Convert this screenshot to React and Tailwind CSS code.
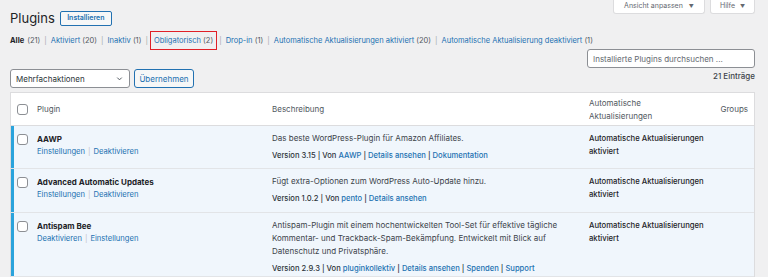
import React from 'react';

const font = { fontFamily: 'Inter, "Liberation Sans", sans-serif' };

const Sep = () => <span className="text-[#a7aaad] mx-[4px]">|</span>;

const Check = () => (
  <span className="block w-[11px] h-[11px] rounded-[3px] border border-[#8c8f94] bg-white" />
);

const plugins = [
  {
    name: 'AAWP',
    actions: ['Einstellungen', 'Deaktivieren'],
    desc: ['Das beste WordPress-Plugin für Amazon Affiliates.'],
    version: '3.15',
    author: 'AAWP',
    links: ['Details ansehen', 'Dokumentation'],
    h: 'h-[43px]',
  },
  {
    name: 'Advanced Automatic Updates',
    actions: ['Einstellungen', 'Deaktivieren'],
    desc: ['Fügt extra-Optionen zum WordPress Auto-Update hinzu.'],
    version: '1.0.2',
    author: 'pento',
    links: ['Details ansehen'],
    h: 'h-[44px]',
  },
  {
    name: 'Antispam Bee',
    actions: ['Deaktivieren', 'Einstellungen'],
    desc: [
      'Antispam-Plugin mit einem hochentwickelten Tool-Set für effektive tägliche',
      'Kommentar- und Trackback-Spam-Bekämpfung. Entwickelt mit Blick auf',
      'Datenschutz und Privatsphäre.',
    ],
    version: '2.9.3',
    author: 'pluginkollektiv',
    links: ['Details ansehen', 'Spenden', 'Support'],
    h: 'h-[64px]',
  },
];

const Row = ({ p }) => (
  <div className={`flex ${p.h} bg-[#f0f6fc] border-b border-[#e2e4e7] shadow-[inset_3px_0_0_#2aa3dc]`}>
    <div className="w-[20px] shrink-0 pl-[6px] pt-[8px]">
      <Check />
    </div>
    <div className="w-[234px] shrink-0 pl-[6px] pt-[7px]">
      <div className="font-bold text-[#1d2327] leading-[13px]">{p.name}</div>
      <div className="text-[#2271b1] text-[7.6px] leading-[12px]">
        {p.actions[0]}
        <span className="text-[#c3c4c7] mx-[3px]">|</span>
        {p.actions[1]}
      </div>
    </div>
    <div className="w-[318px] shrink-0 pl-[7px] pt-[6px] text-[#3c434a]">
      {p.desc.map((d) => (
        <div key={d} className="leading-[13px]">{d}</div>
      ))}
      <div className="mt-[4px] leading-[13px] text-[7.6px] font-medium text-[#2c3338]">
        Version {p.version} | Von <span className="text-[#2271b1]">{p.author}</span>
        {p.links.map((l) => (
          <span key={l}>
            {' '}| <span className="text-[#2271b1]">{l}</span>
          </span>
        ))}
      </div>
    </div>
    <div className="w-[130px] shrink-0 pl-[6px] pt-[6px] text-[#1d2327] text-[7.7px] font-medium leading-[13px]">
      <div>Automatische Aktualisierungen</div>
      <div>aktiviert</div>
    </div>
    <div className="flex-1" />
  </div>
);

export default function App() {
  return (
    <div style={font} className="w-[768px] h-[277px] overflow-hidden bg-[#f0f0f1] text-[8px] text-[#3c434a] relative">
      <div className="absolute top-0 right-[13px] flex gap-[5px]">
        <div className="h-[14px] w-[92px] bg-white border border-t-0 border-[#dcdcde] rounded-b-[3px] text-[#646970] text-[7px] flex items-center justify-center gap-[6px]">
          Ansicht anpassen <span className="text-[5px]">▼</span>
        </div>
        <div className="h-[14px] w-[45px] bg-white border border-t-0 border-[#dcdcde] rounded-b-[3px] text-[#646970] text-[7px] flex items-center justify-center gap-[5px]">
          Hilfe <span className="text-[5px]">▼</span>
        </div>
      </div>

      <div className="pl-[10px] pr-[13px]">
        <div className="flex items-center gap-[5px] pt-[6px] h-[30px]">
          <h1 className="text-[13px] text-[#1d2327] leading-[18px]">Plugins</h1>
          <span className="h-[15px] w-[52px] flex items-center justify-center border border-[#2271b1] rounded-[2px] bg-[#f6f7f7] text-[#2271b1] text-[7px] font-semibold">
            Installieren
          </span>
        </div>

        <div className="flex items-center h-[21px] whitespace-nowrap text-[7.5px]">
          <span className="font-bold text-[#1d2327]">Alle</span>
          <span className="text-[#50575e] ml-[3px]">(21)</span>
          <Sep />
          <span className="text-[#2271b1]">Aktiviert <span className="text-[#50575e]">(20)</span></span>
          <Sep />
          <span className="text-[#2271b1]">Inaktiv <span className="text-[#50575e]">(1)</span></span>
          <Sep />
          <span className="text-[#2271b1] border-[length:1.5px] border-solid border-[color:#e02027] px-[3px] h-[19px] flex items-center -mx-[2px]">
            Obligatorisch&nbsp;<span className="text-[#50575e]">(2)</span>
          </span>
          <Sep />
          <span className="text-[#2271b1]">Drop-in <span className="text-[#50575e]">(1)</span></span>
          <Sep />
          <span className="text-[#2271b1]">Automatische Aktualisierungen aktiviert <span className="text-[#50575e]">(20)</span></span>
          <Sep />
          <span className="text-[#2271b1]">Automatische Aktualisierung deaktiviert <span className="text-[#50575e]">(1)</span></span>
        </div>

        <div className="flex justify-end -mt-[2px]">
          <div className="w-[168px] h-[19px] border border-[#8c8f94] rounded-[3px] bg-white px-[5px] flex items-center text-[#646970]">
            Installierte Plugins durchsuchen ...
          </div>
        </div>

        <div className="flex items-center h-[21px]">
          <div className="w-[120px] h-[19px] border border-[#8c8f94] rounded-[3px] bg-white pl-[5px] pr-[5px] flex items-center justify-between text-[#2c3338]">
            Mehrfachaktionen
            <svg width="9" height="9" viewBox="0 0 20 20" fill="none" stroke="#50575e" strokeWidth="2.2">
              <path d="M5 8l5 5 5-5" />
            </svg>
          </div>
          <span className="ml-[4px] w-[60px] h-[19px] border border-[#2271b1] rounded-[3px] bg-[#f6f7f7] text-[#2271b1] flex items-center justify-center">
            Übernehmen
          </span>
          <span className="ml-auto self-start mt-[2px] text-[#3c434a] font-medium">21 Einträge</span>
        </div>

        <div className="mt-[3px] bg-white border border-[#dcdcde]">
          <div className="flex h-[33px] border-b border-[#dcdcde] text-[#50575e] items-center">
            <div className="w-[20px] shrink-0 pl-[6px]">
              <Check />
            </div>
            <div className="w-[234px] shrink-0 pl-[6px]">Plugin</div>
            <div className="w-[318px] shrink-0 pl-[7px]">Beschreibung</div>
            <div className="w-[130px] shrink-0 pl-[6px] leading-[13px] pt-[2px]">
              Automatische
              <br />
              Aktualisierungen
            </div>
            <div className="flex-1 text-right pr-[6px]">Groups</div>
          </div>
          {plugins.map((p) => (
            <Row key={p.name} p={p} />
          ))}
        </div>
      </div>
    </div>
  );
}
